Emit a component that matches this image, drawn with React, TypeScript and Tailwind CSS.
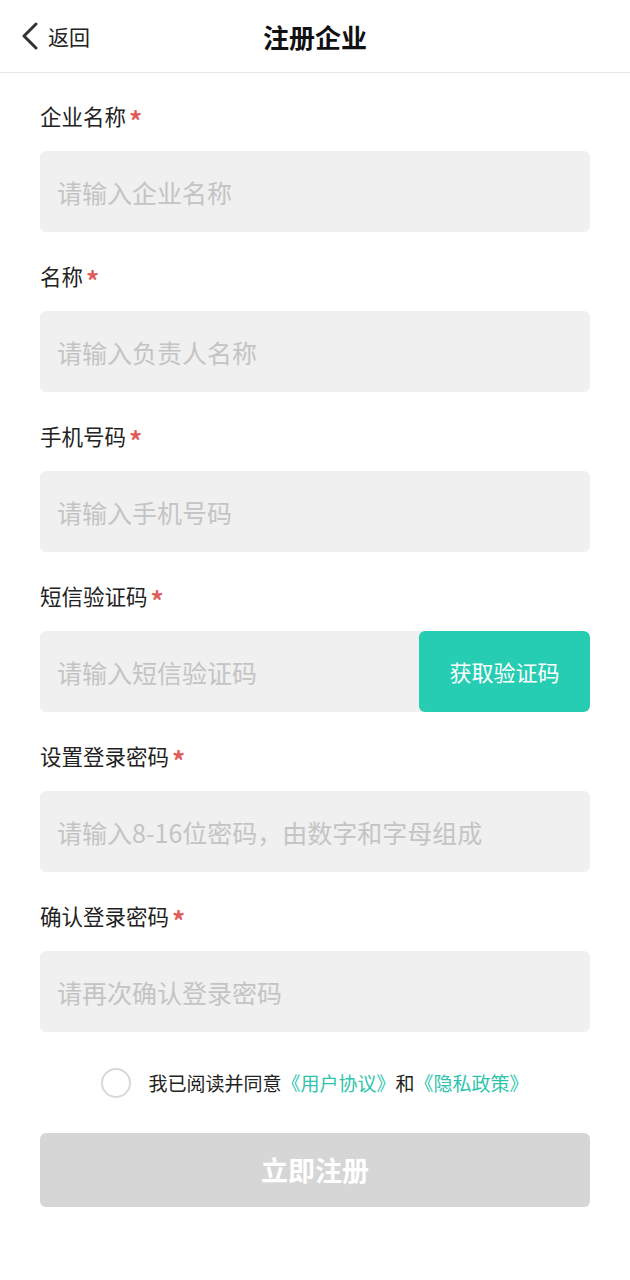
import { useState } from "react";

const font = { fontFamily: '"Noto Sans CJK SC", "Noto Sans", sans-serif' };

interface Field {
    label: string;
    placeholder: string;
    code?: boolean;
}

const fields: Field[] = [
    { label: "企业名称", placeholder: "请输入企业名称" },
    { label: "名称", placeholder: "请输入负责人名称" },
    { label: "手机号码", placeholder: "请输入手机号码" },
    { label: "短信验证码", placeholder: "请输入短信验证码", code: true },
    { label: "设置登录密码", placeholder: "请输入8-16位密码，由数字和字母组成" },
    { label: "确认登录密码", placeholder: "请再次确认登录密码" },
];

const App = () => {
    const [agreed, setAgreed] = useState(false);

    return (
        <div className="min-h-screen w-full bg-white" style={font}>
            {/* header */}
            <header className="relative flex h-[73px] items-center justify-center border-b border-[#e8e8e8]">
                <button className="absolute left-[20px] top-0 flex h-full items-center gap-[8px] text-[#222]">
                    <svg width="20" height="28" viewBox="0 0 20 28" fill="none">
                        <path d="M16 2 L4 14 L16 26" stroke="#333" strokeWidth="3" strokeLinecap="round" strokeLinejoin="round" />
                    </svg>
                    <span className="text-[21px] leading-none">返回</span>
                </button>
                <h1 className="text-[26px] font-bold text-[#111]">注册企业</h1>
            </header>

            <main className="px-[40px] pt-[29px]">
                {fields.map((f) => (
                    <div key={f.label} className="mb-[30px]">
                        <div className="flex h-[28px] items-center text-[21.5px] text-[#222]">
                            {f.label}
                            <span className="ml-[3px] translate-y-[4px] text-[26px] leading-none font-bold text-[#e05d5d]">*</span>
                        </div>
                        <div className="mt-[21px] flex h-[81px] overflow-hidden rounded-[6px] bg-[#f0f0f0]">
                            <input
                                className="h-full min-w-0 flex-1 bg-transparent pl-[17px] text-[25px] text-[#222] outline-none placeholder:text-[#c4c4c4]"
                                placeholder={f.placeholder}
                            />
                            {f.code && (
                                <button className="h-full w-[171px] rounded-[6px] bg-[#26cdb2] text-[22px] text-white">
                                    获取验证码
                                </button>
                            )}
                        </div>
                    </div>
                ))}

                <div className="mt-[36px] flex items-center justify-center gap-[17px]">
                    <button
                        onClick={() => setAgreed(!agreed)}
                        className={
                            agreed
                                ? "h-[30px] w-[30px] rounded-full border-2 border-[#26cdb2] bg-[#26cdb2]"
                                : "h-[30px] w-[30px] rounded-full border-2 border-[#d8d8d8] bg-white"
                        }
                    />
                    <p className="text-[19px] text-[#222]">
                        我已阅读并同意
                        <span className="text-[#2cc5ab]">《用户协议》</span>和
                        <span className="text-[#2cc5ab]">《隐私政策》</span>
                    </p>
                </div>

                <button className="mt-[35px] h-[74px] w-full rounded-[6px] bg-[#d6d6d6] text-[27px] font-bold text-white">
                    立即注册
                </button>
            </main>
        </div>
    );
};

export default App;
